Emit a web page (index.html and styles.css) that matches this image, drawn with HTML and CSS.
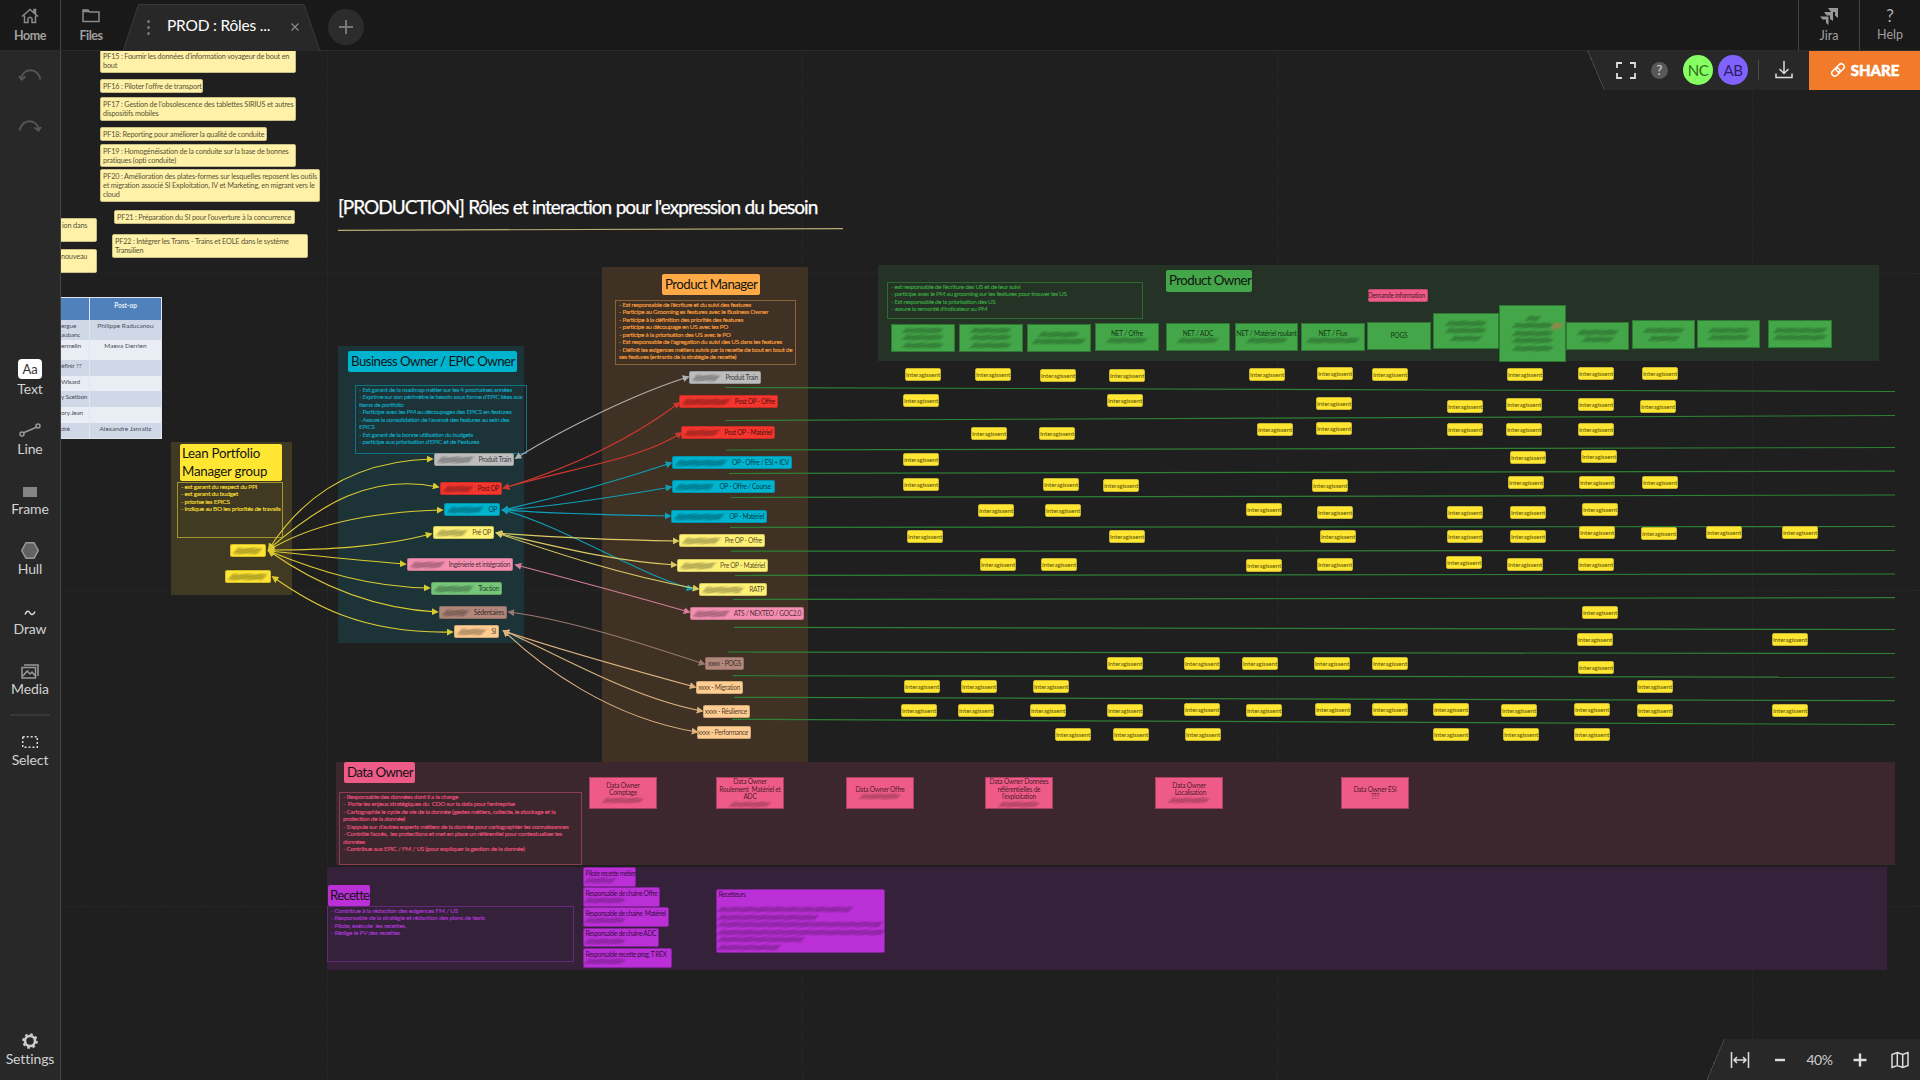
FILE: index.html
```html
<!DOCTYPE html>
<html lang="fr">
<head>
<meta charset="utf-8">
<title>PROD : Rôles et interaction</title>
<link rel="stylesheet" href="styles.css">
</head>
<body>
<header class="topbar">
  <a class="top-item top-home"><svg width="18" height="16" viewBox="0 0 18 16"><path d="M1 8.500 9 1.500l8 7M3.500 7.500V14.500H7V10.500q2-2.500 4 0V14.500h3.500V7.500M13 4.500V1.500h1.500V6"/></svg><span>Home</span></a>
  <a class="top-item top-files"><svg width="18" height="16" viewBox="0 0 18 16"><path d="M1 13.500V2h5l1.500 2H17v9.500zM1 3.500h6"/></svg><span>Files</span></a>
  <div class="tab">
    <svg class="tab-shape" width="198" height="47" viewBox="0 0 198 47"><path d="M0 47 15.500.5H181L197 47"/></svg>
    <span class="tab-dots"><i></i><i></i><i></i></span>
    <span class="tab-title">PROD : Rôles ...</span>
    <svg class="tab-close" width="8" height="8" viewBox="0 0 8 8"><path d="M.5.5l7 7M7.500.5l-7 7"/></svg>
  </div>
  <button class="tab-add"><svg width="16" height="16" viewBox="0 0 16 16"><path d="M8 1v14M1 8h14"/></svg></button>
  <div class="top-right">
    <a class="top-item"><svg class="solid" width="18" height="18" viewBox="0 0 18 18"><path d="M8 0h10v10l-3-2.500V4H11z"/><path d="M4 4h9v9l-3-2V7.500H6.500z"/><path d="M0 8.500h8.500V17L6 15v-3.500H2.500z"/></svg><span>Jira</span></a>
    <a class="top-item"><b class="qmark">?</b><span>Help</span></a>
  </div>
</header>

<div class="workspace">
  <nav class="sidebar">
    <svg class="undo" width="24" height="14" viewBox="0 0 24 14"><path d="M3 10C6 0 19-1 22.500 11.500M1 8l2.500 3.500L7.500 8.500"/></svg>
    <svg class="redo" width="24" height="14" viewBox="0 0 24 14"><path d="M21 10C18 0 5-1 1.500 11.500M23 8l-2.500 3.500L16.500 8.500"/></svg>
    <div class="tools">
      <a class="tool"><b class="aa">Aa</b><span>Text</span></a>
      <a class="tool"><svg width="22" height="14" viewBox="0 0 22 14"><path d="M4 10 18 4"/><circle cx="3" cy="11" r="2"/><circle cx="19" cy="3" r="2"/></svg><span class="gap2">Line</span></a>
      <a class="tool"><i class="frame-ico"></i><span class="gap2">Frame</span></a>
      <a class="tool"><svg class="hull" width="18" height="17" viewBox="0 0 18 17"><path d="M5 .7h8l4.300 7.800L13 16.300H5L.7 8.500z"/></svg><span>Hull</span></a>
      <a class="tool"><svg class="bright" width="12" height="6" viewBox="0 0 12 6"><path d="M1 4.500C3-.5 5 1 6 3s3.500 2.500 5-1.500"/></svg><span class="gap3">Draw</span></a>
      <a class="tool"><svg width="18" height="15" viewBox="0 0 18 15"><path d="M1 3.500h13.500V14H1zM3 1h14v11M2 12l4-5 3 3 2-2 3 3.500M7 6.500h.5"/></svg><span>Media</span></a>
      <hr>
      <a class="tool select"><svg class="bright" width="16" height="12" viewBox="0 0 16 12"><path stroke-dasharray="2 2" d="M.7.7h14.600v10.600H.7z"/></svg><span class="gap2">Select</span></a>
    </div>
    <a class="tool settings"><svg class="gear" width="16" height="16" viewBox="0 0 16 16"><circle cx="8" cy="8" r="5"/><circle class="teeth" cx="8" cy="8" r="6.800"/></svg><span>Settings</span></a>
  </nav>

  <main class="canvas">
  <div class="board">
    <i class="gv" style="left:327px"></i><i class="gv" style="left:802px"></i><i class="gv" style="left:1277px"></i><i class="gv" style="left:1752px"></i>
    <i class="gh" style="top:273px"></i><i class="gh" style="top:590px"></i><i class="gh" style="top:906px"></i>

    <div class="note" style="left:100px;top:49px;width:196px;height:24px">PF15 : Fournir les données d'information voyageur de bout en<br>bout</div>
    <div class="note" style="left:100px;top:79px;width:103px;height:14px">PF16 : Piloter l'offre de transport</div>
    <div class="note" style="left:100px;top:97px;width:196px;height:24px">PF17 : Gestion de l'obsolescence des tablettes SIRIUS et autres<br>dispositifs mobiles</div>
    <div class="note" style="left:100px;top:127px;width:167px;height:14px">PF18: Reporting pour améliorer la qualité de conduite</div>
    <div class="note" style="left:100px;top:144px;width:196px;height:23px">PF19 : Homogénéisation de la conduite sur la base de bonnes<br>pratiques (opti conduite)</div>
    <div class="note" style="left:100px;top:169px;width:220px;height:33px">PF20 : Amélioration des plates-formes sur lesquelles reposent les outils<br>et migration associé SI Exploitation, IV et Marketing, en migrant vers le<br>cloud</div>
    <div class="note" style="left:114px;top:210px;width:181px;height:14px">PF21 : Préparation du SI pour l'ouverture à la concurrence</div>
    <div class="note" style="left:112px;top:234px;width:196px;height:24px">PF22 : Intégrer les Trams - Trains et EOLE dans le système<br>Transilien</div>
    <div class="note" style="left:59px;top:218px;width:38px;height:24px">ion dans<br>&nbsp;</div>
    <div class="note" style="left:58px;top:249px;width:39px;height:24px">nouveau<br>&nbsp;</div>

    <table class="roster">
      <tr class="r22"><th></th><th>Post-op</th></tr>
      <tr class="r20"><td>ergue<br>aubanc</td><td>Philippe Raducanou</td></tr>
      <tr class="r20"><td>ermelin</td><td>Maeva Derrien</td></tr>
      <tr><td>éfinir ??</td><td></td></tr>
      <tr><td>Wisard</td><td></td></tr>
      <tr><td>y Scetbon</td><td></td></tr>
      <tr><td>ory Jean</td><td></td></tr>
      <tr><td>dré</td><td>Alexandre Janraitz</td></tr>
    </table>

    <h1 class="board-title">[PRODUCTION] Rôles et interaction pour l'expression du besoin</h1>

    <section class="zone z-lean" style="left:171px;top:442px;width:121px;height:153px"></section>
    <section class="zone z-bo" style="left:338px;top:346px;width:186px;height:297px"></section>
    <section class="zone z-pm" style="left:602px;top:267px;width:206px;height:496px"></section>
    <section class="zone z-po" style="left:878px;top:265px;width:1001px;height:96px"></section>
    <section class="zone z-do" style="left:336px;top:762px;width:1559px;height:103px"></section>
    <section class="zone z-re" style="left:327px;top:867px;width:1560px;height:103px"></section>

    <h2 class="head yellow two" style="left:180px;top:444px;width:102px;height:37px">Lean Portfolio<br>Manager group</h2>
    <h2 class="head cyan" style="left:348px;top:351px;width:169px;height:21px">Business Owner / EPIC Owner</h2>
    <h2 class="head orange" style="left:662px;top:274px;width:98px;height:21px">Product Manager</h2>
    <h2 class="head green" style="left:1166px;top:270px;width:86px;height:22px">Product Owner</h2>
    <h2 class="head rose" style="left:344px;top:762px;width:71px;height:21px">Data Owner</h2>
    <h2 class="head violet" style="left:328px;top:885px;width:42px;height:21px">Recette</h2>

    <div class="desc d-lean" style="left:177px;top:482px;width:106px;height:56px">- est garant du respect du PPI<br>- est garant du budget<br>- priorise les EPICS<br>- Indique au BO les priorités de travails</div>
    <div class="desc d-bo" style="left:355px;top:385px;width:172px;height:69px">- Est garant de la roadmap métier sur les 4 prochaines années<br>- Exprime sur son périmètre le besoin sous forme d'EPIC liées aux<br>items de portfolio<br>- Participe avec les PM au découpages des EPICS en features<br>- Assure la consolidation de l'avancé des features au sein des<br>EPICS<br>- Est garant de la bonne utilisation du budgets<br>- participe aux priorisation d'EPIC et de Features</div>
    <div class="desc d-pm" style="left:615px;top:300px;width:181px;height:65px">- Est responsable de l'écriture et du suivi des features<br>- Participe au Grooming es features avec le Business Owner<br>- Participe à la définition des priorités des features<br>- participe au découpage en US avec les PO<br>- participe à la priorisation des US avec le PO<br>- Est responsable de l'agregation du suivi des US dans les features<br>- Définit les exigences métiers suivis par la recette de bout en bout de<br>ses features (entrants de la stratégie de recette)</div>
    <div class="desc d-po" style="left:887px;top:282px;width:256px;height:37px">- est responsable de l'écriture des US et de leur suivi<br>- participe avec le PM au grooming sur les features pour trouver les US<br>- Est responsable de la priorisation des US<br>- assure la remonté d'indicateur au PM</div>
    <div class="desc d-do" style="left:339px;top:792px;width:243px;height:73px">- Responsable des données dont il a la charge<br>-&nbsp; Porte les enjeux stratégiques du&nbsp; CDO sur la data pour l'entreprise<br>- Cartographie le cycle de vie de la donnée (gestes métiers, collecte, le stockage et la<br>protection de la donnée)<br>- S'appuie sur d'autres experts métiers de la donnée pour cartographier les connaissances<br>- Contrôle l'accès,&nbsp; les protections et met en place un référentiel pour contextualiser les<br>données<br>- Contribue aux EPIC / FM / US (pour expliquer la gestion de la donnée)</div>
    <div class="desc d-re" style="left:327px;top:906px;width:247px;height:56px">- Contribue à la rédaction des exigences FM / US<br>- Responsable de la stratégie et rédaction des plans de tests<br>- Pilote, exécute&nbsp; les recettes,<br>- Rédige le PV des recettes</div>

    <div class="node yellow" style="left:230px;top:544px;width:36px"><i></i></div>
    <div class="node yellow" style="left:225px;top:570px;width:46px"><i></i></div>

    <div class="node grey" style="left:434px;top:453px;width:80px"><i></i>Produit Train</div>
    <div class="node red" style="left:440px;top:482px;width:62px"><i></i>Post OP</div>
    <div class="node cyan" style="left:444px;top:503px;width:56px"><i></i>OP</div>
    <div class="node lemon" style="left:433px;top:526px;width:61px"><i></i>Pré OP</div>
    <div class="node pink" style="left:407px;top:558px;width:106px"><i></i>Ingénierie et intégration</div>
    <div class="node mint" style="left:431px;top:582px;width:71px"><i></i>Traction</div>
    <div class="node brown" style="left:439px;top:606px;width:68px"><i></i>Sédentaires</div>
    <div class="node peach" style="left:454px;top:625px;width:45px"><i></i>SI</div>

    <div class="node grey" style="left:689px;top:371px;width:72px"><i></i>Produit Train</div>
    <div class="node red" style="left:679px;top:395px;width:99px"><i></i>Post OP - Offre</div>
    <div class="node red" style="left:681px;top:426px;width:94px"><i></i>Post OP - Matériel</div>
    <div class="node cyan" style="left:672px;top:456px;width:120px"><i></i>OP - Offre / ESI + ICV</div>
    <div class="node cyan" style="left:672px;top:480px;width:103px"><i></i>OP - Offre / Course&nbsp;</div>
    <div class="node cyan" style="left:671px;top:510px;width:96px"><i></i>OP - Matériel</div>
    <div class="node lemon" style="left:679px;top:534px;width:86px"><i></i>Pre OP - Offre</div>
    <div class="node lemon" style="left:677px;top:559px;width:91px"><i></i>Pre OP - Matériel</div>
    <div class="node lemon" style="left:699px;top:583px;width:68px"><i></i>RATP</div>
    <div class="node pink" style="left:690px;top:607px;width:114px"><i></i>ATS / NEXTEO / GOC2.0</div>
    <div class="node brown" style="left:705px;top:657px;width:39px">xxxx - POGS</div>
    <div class="node peach" style="left:696px;top:681px;width:47px">xxxx - Migration</div>
    <div class="node peach" style="left:703px;top:705px;width:47px">xxxx - Résilience</div>
    <div class="node peach" style="left:697px;top:726px;width:54px">xxxx - Performance</div>
    <div class="node rose" style="left:1368px;top:289px;width:60px">Demande information</div>

    <div class="card green" style="left:891px;top:324px;width:64px;height:28px"><i></i><i></i><i></i></div>
    <div class="card green" style="left:959px;top:324px;width:64px;height:28px"><i></i><i></i><i></i></div>
    <div class="card green" style="left:1027px;top:324px;width:64px;height:28px"><i></i><i class="wide"></i></div>
    <div class="card green" style="left:1095px;top:323px;width:64px;height:28px">NET / Offre<i></i></div>
    <div class="card green" style="left:1166px;top:323px;width:64px;height:28px">NET / ADC<i></i></div>
    <div class="card green" style="left:1235px;top:323px;width:63px;height:28px">NET / Matériel roulant<i></i></div>
    <div class="card green" style="left:1301px;top:323px;width:64px;height:28px">NET / Flux<i class="wide"></i></div>
    <div class="card green" style="left:1367px;top:322px;width:64px;height:28px">POGS</div>
    <div class="card green" style="left:1433px;top:313px;width:66px;height:36px"><i></i><i></i><i class="short"></i></div>
    <div class="card green" style="left:1566px;top:322px;width:63px;height:28px"><i></i><i class="short"></i></div>
    <div class="card green" style="left:1499px;top:305px;width:67px;height:57px"><i class="tiny"></i><i></i><i></i><i></i><i></i></div>
    <div class="card green" style="left:1632px;top:320px;width:63px;height:29px"><i></i><i class="short"></i></div>
    <div class="card green" style="left:1697px;top:320px;width:63px;height:28px"><i></i><i></i></div>
    <div class="card green" style="left:1768px;top:320px;width:64px;height:28px"><i class="wide"></i><i class="wide"></i></div>
    <i class="spot"></i>

    <div class="card rose" style="left:589px;top:777px;width:68px;height:32px">Data Owner<br>Comptage<i></i></div>
    <div class="card rose" style="left:716px;top:777px;width:68px;height:32px">Data Owner<br>Roulement&nbsp; Matériel et<br>ADC<i></i></div>
    <div class="card rose" style="left:846px;top:777px;width:68px;height:32px">Data Owner Offre<i></i></div>
    <div class="card rose" style="left:985px;top:777px;width:68px;height:32px">Data Owner Données<br>référentielles de<br>l'exploitation<i></i></div>
    <div class="card rose" style="left:1155px;top:777px;width:68px;height:32px">Data Owner<br>&nbsp; Localisation<i></i></div>
    <div class="card rose" style="left:1341px;top:777px;width:68px;height:32px">Data Owner ESI<br>???</div>

    <div class="card violet left" style="left:583px;top:867px;width:53px;height:20px">Pilote recette métier<i class="short"></i></div>
    <div class="card violet left" style="left:583px;top:887px;width:77px;height:20px">Responsable de chaine Offre<i></i></div>
    <div class="card violet left" style="left:583px;top:907px;width:86px;height:20px">Responsable de chaine&nbsp; Matériel<i></i></div>
    <div class="card violet left" style="left:583px;top:928px;width:76px;height:19px">Responsable de chaine ADC<i></i></div>
    <div class="card violet left" style="left:583px;top:948px;width:89px;height:20px">Responsable recette prog. T REX<i></i></div>
    <div class="card violet left" style="left:716px;top:889px;width:169px;height:64px">Recetteurs<em></em><i style="width:132px"></i><i style="width:98px"></i><i style="width:162px"></i><i style="width:164px"></i><i style="width:84px"></i><i style="width:60px"></i></div>

    <svg class="links" width="1920" height="1080" viewBox="0 0 1920 1080">
      <defs>
        <marker id="arrow" viewBox="0 0 6 6" refX="4.500" refY="3" markerWidth="7" markerHeight="7" markerUnits="userSpaceOnUse" orient="auto-start-reverse"><path stroke="none" d="M0 0 6 3 0 6z" fill="context-stroke"/></marker>
      </defs>
      <path class="rule" d="M338 230.300 843 228.600"/>
      <g class="lanes">
        <path d="M725 387.500 1895 391.500"/><path d="M725 420.500 1895 415.500"/><path d="M726 450 1895 447.500"/><path d="M729 473.500 1895 471.200"/><path d="M731 497.500 1895 495"/><path d="M730 527.300 1895 526.500"/><path d="M731 551.200 1895 550.500"/><path d="M735 575.500 1895 574"/><path d="M733 599.500 1895 597.700"/><path d="M734 627.300 1895 629.500"/><path d="M728 652 1895 653.500"/><path d="M733 675.700 1895 677.200"/><path d="M734 697.300 1895 700.700"/><path d="M732 719.300 1895 724.500"/>
      </g>
      <g class="arrows">
        <g stroke="#ddcb33"><path d="M269 549C300 500 350 461 432 459"/><path d="M269 549C320 505 370 473 438 487"/><path d="M269 550C310 525 370 512 442 510"/><path d="M269 550C330 550 380 547 431 534"/><path d="M269 551C310 555 350 560 405 564"/><path d="M269 551C320 572 370 587 429 588"/><path d="M269 551C310 580 365 608 437 612"/><path d="M273 577C310 603 360 634 452 632"/></g>
        <g stroke="#b0b0b0"><path d="M516 458C570 425 640 392 688 377"/></g>
        <g stroke="#cf382f"><path d="M504 488C570 468 630 440 679 403"/><path d="M504 488C570 468 640 460 681 433"/></g>
        <g stroke="#109fb8"><path d="M503 510C560 497 620 480 671 463"/><path d="M503 510C560 506 620 496 671 487"/><path d="M503 510C560 514 620 515 670 516"/><path d="M503 510C560 525 640 575 692 589"/></g>
        <g stroke="#dccb62"><path d="M497 533C560 538 620 540 678 541"/><path d="M497 533C550 545 610 561 676 565"/><path d="M497 533C550 551 620 575 698 589"/></g>
        <g stroke="#d47e9b"><path d="M516 565C570 579 640 598 689 612"/></g>
        <g stroke="#9a786c"><path d="M509 612C570 620 640 643 704 664"/></g>
        <g stroke="#ddb27f"><path d="M504 631C560 650 640 672 695 687"/><path d="M504 631C550 650 630 698 702 711"/><path d="M504 631C540 666 610 718 697 732"/></g>
      </g>
    </svg>

    <b class="tag" style="left:905px;top:368px">Interagissent</b><b class="tag" style="left:975px;top:368px">Interagissent</b><b class="tag" style="left:1040px;top:369px">Interagissent</b><b class="tag" style="left:1109px;top:369px">Interagissent</b><b class="tag" style="left:1249px;top:368px">Interagissent</b><b class="tag" style="left:1317px;top:367px">Interagissent</b><b class="tag" style="left:1372px;top:368px">Interagissent</b><b class="tag" style="left:1507px;top:368px">Interagissent</b><b class="tag" style="left:1578px;top:367px">Interagissent</b><b class="tag" style="left:1642px;top:367px">Interagissent</b>
    <b class="tag" style="left:903px;top:394px">Interagissent</b><b class="tag" style="left:1107px;top:394px">Interagissent</b><b class="tag" style="left:1316px;top:397px">Interagissent</b><b class="tag" style="left:1447px;top:400px">Interagissent</b><b class="tag" style="left:1506px;top:398px">Interagissent</b><b class="tag" style="left:1578px;top:398px">Interagissent</b><b class="tag" style="left:1640px;top:400px">Interagissent</b>
    <b class="tag" style="left:971px;top:427px">Interagissent</b><b class="tag" style="left:1039px;top:427px">Interagissent</b><b class="tag" style="left:1257px;top:423px">Interagissent</b><b class="tag" style="left:1316px;top:422px">Interagissent</b><b class="tag" style="left:1447px;top:423px">Interagissent</b><b class="tag" style="left:1506px;top:423px">Interagissent</b><b class="tag" style="left:1578px;top:423px">Interagissent</b>
    <b class="tag" style="left:903px;top:453px">Interagissent</b><b class="tag" style="left:1510px;top:451px">Interagissent</b><b class="tag" style="left:1581px;top:450px">Interagissent</b>
    <b class="tag" style="left:903px;top:478px">Interagissent</b><b class="tag" style="left:1043px;top:478px">Interagissent</b><b class="tag" style="left:1103px;top:479px">Interagissent</b><b class="tag" style="left:1312px;top:479px">Interagissent</b><b class="tag" style="left:1508px;top:476px">Interagissent</b><b class="tag" style="left:1579px;top:476px">Interagissent</b><b class="tag" style="left:1642px;top:476px">Interagissent</b>
    <b class="tag" style="left:978px;top:504px">Interagissent</b><b class="tag" style="left:1045px;top:504px">Interagissent</b><b class="tag" style="left:1246px;top:503px">Interagissent</b><b class="tag" style="left:1317px;top:506px">Interagissent</b><b class="tag" style="left:1447px;top:506px">Interagissent</b><b class="tag" style="left:1510px;top:506px">Interagissent</b><b class="tag" style="left:1582px;top:503px">Interagissent</b>
    <b class="tag" style="left:907px;top:530px">Interagissent</b><b class="tag" style="left:1109px;top:530px">Interagissent</b><b class="tag" style="left:1320px;top:530px">Interagissent</b><b class="tag" style="left:1447px;top:530px">Interagissent</b><b class="tag" style="left:1510px;top:530px">Interagissent</b><b class="tag" style="left:1579px;top:526px">Interagissent</b><b class="tag" style="left:1641px;top:527px">Interagissent</b><b class="tag" style="left:1706px;top:526px">Interagissent</b><b class="tag" style="left:1782px;top:526px">Interagissent</b>
    <b class="tag" style="left:980px;top:558px">Interagissent</b><b class="tag" style="left:1041px;top:558px">Interagissent</b><b class="tag" style="left:1246px;top:559px">Interagissent</b><b class="tag" style="left:1317px;top:558px">Interagissent</b><b class="tag" style="left:1446px;top:556px">Interagissent</b><b class="tag" style="left:1507px;top:558px">Interagissent</b><b class="tag" style="left:1578px;top:558px">Interagissent</b>
    <b class="tag" style="left:1582px;top:606px">Interagissent</b>
    <b class="tag" style="left:1577px;top:633px">Interagissent</b><b class="tag" style="left:1772px;top:633px">Interagissent</b>
    <b class="tag" style="left:1107px;top:657px">Interagissent</b><b class="tag" style="left:1184px;top:657px">Interagissent</b><b class="tag" style="left:1242px;top:657px">Interagissent</b><b class="tag" style="left:1314px;top:657px">Interagissent</b><b class="tag" style="left:1372px;top:657px">Interagissent</b><b class="tag" style="left:1578px;top:661px">Interagissent</b>
    <b class="tag" style="left:904px;top:680px">Interagissent</b><b class="tag" style="left:961px;top:680px">Interagissent</b><b class="tag" style="left:1033px;top:680px">Interagissent</b><b class="tag" style="left:1637px;top:680px">Interagissent</b>
    <b class="tag" style="left:901px;top:704px">Interagissent</b><b class="tag" style="left:958px;top:704px">Interagissent</b><b class="tag" style="left:1030px;top:704px">Interagissent</b><b class="tag" style="left:1107px;top:704px">Interagissent</b><b class="tag" style="left:1184px;top:703px">Interagissent</b><b class="tag" style="left:1246px;top:704px">Interagissent</b><b class="tag" style="left:1315px;top:703px">Interagissent</b><b class="tag" style="left:1372px;top:703px">Interagissent</b><b class="tag" style="left:1433px;top:703px">Interagissent</b><b class="tag" style="left:1501px;top:704px">Interagissent</b><b class="tag" style="left:1574px;top:703px">Interagissent</b><b class="tag" style="left:1637px;top:704px">Interagissent</b><b class="tag" style="left:1772px;top:704px">Interagissent</b>
    <b class="tag" style="left:1055px;top:728px">Interagissent</b><b class="tag" style="left:1113px;top:728px">Interagissent</b><b class="tag" style="left:1185px;top:728px">Interagissent</b><b class="tag" style="left:1433px;top:728px">Interagissent</b><b class="tag" style="left:1503px;top:728px">Interagissent</b><b class="tag" style="left:1574px;top:728px">Interagissent</b>
  </div>

  <div class="actions">
    <svg width="20" height="17" viewBox="0 0 20 17"><path stroke-width="1.800" d="M1 6V1h5M14 1h5v5M19 11v5h-5M6 16H1v-5"/></svg>
    <b class="help-dot">?</b>
    <span class="avatar nc">NC</span>
    <span class="avatar ab">AB</span>
    <i class="divider"></i>
    <svg class="download" width="18" height="18" viewBox="0 0 18 18"><path d="M9 0v12M4.500 8 9 12.500 13.500 8M1 12.500V16.500h16v-4"/></svg>
    <button class="share"><svg width="16" height="16" viewBox="0 0 16 16"><g transform="rotate(-45 8 8)"><rect x=".5" y="5" width="9" height="6" rx="3"/><rect x="6.500" y="5" width="9" height="6" rx="3"/></g></svg>SHARE</button>
  </div>

  <div class="zoombar">
    <svg width="20" height="16" viewBox="0 0 20 16"><path d="M1.500 0v16M18.500 0v16M4 8h12M7 5 4 8l3 3M13 5l3 3-3 3"/></svg>
    <svg class="minus" width="12" height="12" viewBox="0 0 12 12"><path stroke-width="2.400" d="M1 6h10"/></svg>
    <span>40%</span>
    <svg class="plus" width="14" height="14" viewBox="0 0 14 14"><path stroke-width="2.400" d="M7 .5v13M.5 7h13"/></svg>
    <svg width="18" height="18" viewBox="0 0 18 18"><path d="M1 3.500 6.300 1.500 11.700 3.500 17 1.500V14.500L11.700 16.500 6.300 14.500 1 16.500zM6.300 1.500v13M11.700 3.500v13"/></svg>
  </div>
  </main>
</div>
</body>
</html>
```
FILE: styles.css
```css
* { box-sizing: border-box; }
body {
  margin: 0; width: 1920px; height: 1080px; overflow: hidden;
  display: flex; flex-direction: column;
  background: #1f1f1f; color: #ccc;
  font-family: Lato, "Open Sans", sans-serif;
}
svg { fill: none; stroke: #999; stroke-width: 1.5; display: block; }
button { border: 0; padding: 0; font: inherit; color: inherit; }
.solid { fill: #999; stroke: none; }
.bright { stroke: #ddd; }

/* top bar */
.topbar { position: relative; z-index: 3; height: 51px; flex: none; display: flex; background: #191919; border-bottom: 1px solid #2c2c2c; }
.top-item { width: 61px; display: flex; flex-direction: column; align-items: center; padding-top: 8px; color: #a0a0a0; font-size: 12.500px; line-height: 14px; gap: 5px; }
.top-item svg:not(.solid) { stroke: #8a8a8a; }
.top-home { border-right: 1px solid #454545; }
.top-files { padding-right: 1px; }
.top-home, .top-files { font-weight: 700; letter-spacing: -.5px; }
.tab { position: relative; margin: 4px 0 0 1px; width: 198px; height: 46px; display: flex; align-items: center; }
.tab-shape { position: absolute; inset: 0; fill: #282828; stroke: #3a3a3a; stroke-width: 1; }
.tab-dots { position: relative; margin-left: 24px; display: flex; flex-direction: column; gap: 3px; }
.tab-dots i { width: 3px; height: 3px; border-radius: 50%; background: #777; }
.tab-title { position: relative; margin: -4px 0 0 17px; width: 103px; white-space: nowrap; color: #fff; font-size: 15.500px; letter-spacing: -.2px; }
.tab-close { position: relative; margin-left: 21px; stroke: #888; stroke-width: 1.200; }
.tab-add { margin: 9px 0 0 7px; width: 36px; height: 36px; border-radius: 50%; background: #2c2c2c; display: grid; place-items: center; }
.tab-add svg { stroke: #777; stroke-width: 2; }
.top-right { margin-left: auto; display: flex; }
.top-right .top-item { border-left: 1px solid #454545; gap: 3px; }
.qmark { font-size: 17px; line-height: 16px; font-weight: 400; color: #b0b0b0; }
.qmark + span { padding-top: 1px; }

/* left tools */
.workspace { flex: 1; display: flex; min-height: 0; }
.sidebar { position: relative; z-index: 2; width: 61px; flex: none; background: #282828; border-right: 1px solid #454545; display: flex; flex-direction: column; align-items: center; }
.undo, .redo { stroke: #555; stroke-width: 2; margin-top: 17px; }
.redo { margin-top: 37px; }
.tools { margin-top: 206px; width: 60px; display: flex; flex-direction: column; align-items: center; }
.tool { height: 60px; display: flex; flex-direction: column; align-items: center; justify-content: flex-end; font-size: 14px; line-height: 20px; color: #d2d2d2; letter-spacing: -.1px; }
.tool .gap3 { padding-top: 3px; }
.tool .gap2 { padding-top: 2px; }
.aa { width: 24px; height: 20px; border-radius: 4px; background: #fff; color: #333; font-size: 13px; font-weight: 400; text-align: center; }
.frame-ico { width: 14px; height: 10px; background: #858585; }
.hull { fill: #626262; stroke: #999; }
.tools hr { width: 40px; height: 2px; margin: 15px 0 0; border: 0; background: #383838; }
.tool.select { height: 54px; }
.tool.settings { margin-top: auto; margin-bottom: 11px; height: 36px; }
.gear { stroke: #ccc; stroke-width: 2.600; flex: none; }
.gear .teeth { stroke-width: 2; stroke-dasharray: 2.700 2.640; }

/* canvas */
.canvas { position: relative; flex: 1; overflow: hidden; background: #1f1f1f; }
.board { position: absolute; left: -61px; top: -51px; width: 1920px; height: 1080px; }
.board > * { position: absolute; margin: 0; white-space: nowrap; }
.gv { top: 0; height: 1080px; border-left: 1px dashed #282828; }
.gh { left: 0; width: 1920px; border-top: 1px dashed #282828; }
.note { padding: 1.500px 0 0 2px; border-radius: 2px; background: #fff2a8; border: 1px solid #c9bf85; color: #5a5338; font-size: 7.300px; line-height: 9.200px; letter-spacing: -.18px; }
.board-title { left: 338px; top: 193px; font-size: 19px; line-height: 28px; font-weight: 400; color: #fff; letter-spacing: -.96px; word-spacing: .5px; -webkit-text-stroke: .25px #fff; }

.roster { left: 58px; top: 297px; width: 104px; table-layout: fixed; border-collapse: collapse; font: 6.500px/9px Lato, sans-serif; color: #4a505c; border: 1px solid #dfe3ea; }
.roster tr { height: 15.700px; background: #d0d8e8; }
.roster tr:nth-child(odd) { background: #e9edf4; }
.roster tr.r20 { height: 20px; }
.roster tr.r22 { height: 22.500px; background: #4f81bd; color: #e6edf6; }
.roster td, .roster th { padding: 1px 2px; vertical-align: top; text-align: center; border-right: 1px solid #dfe6f0; }
.roster th { padding-top: 3px; }
.roster td:first-child, .roster th:first-child { width: 31px; text-align: left; overflow: visible; letter-spacing: -.2px; }

.z-lean { background: #403a22; }
.z-bo { background: #1c3338; }
.z-pm { background: #3f3225; }
.z-po { background: #253326; }
.z-do { background: #3d272e; }
.z-re { background: #35213a; }

.head { padding-left: 3px; border-radius: 2px; color: #141414; font-size: 13.300px; line-height: 21px; font-weight: 400; letter-spacing: -.57px; }
.head.two { line-height: 17.500px; padding: 1px 0 0 2px; letter-spacing: -.25px; }
.head.violet { padding-left: 2px; letter-spacing: -.75px; }
.yellow { background: #ffe633; }
.cyan { background: #00b4d0; }
.orange { background: #ffaa46; }
.green { background: #43a648; }
.rose { background: #ee5b88; }
.violet { background: #ba30d6; }
.grey { background: #bdbdbd; }
.red { background: #f4362e; }
.lemon { background: #fff176; }
.pink { background: #f48fb1; }
.mint { background: #76c77a; }
.brown { background: #b0877a; }
.peach { background: #ffcc91; }

.desc { padding: 0 0 0 3px; border: 1px solid; font-size: 6.400px; line-height: 7.450px; letter-spacing: -.3px; -webkit-text-stroke: .15px currentColor; }
.d-lean { border-color: #a3942f; color: #f2da35; letter-spacing: -.22px; }
.d-bo { border-color: #107384; color: #10a5be; }
.d-pm { border-color: #8d6334; color: #f59c3d; }
.d-po { border-color: #2c6b30; color: #3aa340; }
.d-do { border-color: #8e3d55; color: #e5507c; letter-spacing: -.26px; }
.d-re { border-color: #64297a; color: #a638cb; letter-spacing: -.21px; }

.node { height: 13px; padding: 0 2px 0 1px; display: flex; align-items: center; justify-content: flex-end; gap: 4px; border-radius: 2px; border: 1px solid rgba(0, 0, 0, .18); color: rgba(0, 0, 0, .72); font-size: 6.600px; line-height: 11px; letter-spacing: -.32px; }
.node i, .card i {
  height: 6px; flex: 1; transform: skewX(-40deg); filter: blur(.9px);
  background: repeating-linear-gradient(168deg, rgba(0, 0, 0, .42) 0 1.500px, rgba(0, 0, 0, .12) 1.500px 3px);
}
.node i { margin: 0 3px; }
.card { display: flex; flex-direction: column; align-items: center; justify-content: center; text-align: center; border: 1px solid rgba(0, 0, 0, .28); color: rgba(0, 0, 0, .72); font-size: 6.600px; line-height: 7.500px; letter-spacing: -.22px; }
.card i { flex: none; width: 38px; height: 5px; margin: 1px 0 1.500px; opacity: .8; }
.card i.wide { width: 50px; }
.card i.short { width: 28px; }
.card i.tiny { width: 12px; }
.card.left { align-items: flex-start; padding-left: 1.500px; border-radius: 2px; letter-spacing: -.42px; }
.card em { height: 8px; }
.spot { left: 1552px; top: 323px; width: 10px; height: 6px; background: #8c8a4c; transform: skewX(-30deg); filter: blur(1px); }

.tag { width: 36px; height: 13px; border-radius: 2px; background: #ffe633; border: 1px solid #c9b62f; color: #5c5208; font-size: 6.300px; line-height: 11px; font-weight: 400; text-align: center; letter-spacing: -.1px; }
.links { left: 0; top: 0; }
.rule { stroke: #b5ac72; stroke-width: 1.200; }
.lanes { stroke: #2d8034; stroke-width: 1.200; }
.arrows { stroke-width: 1.100; }
.arrows path { marker-start: url(#arrow); marker-end: url(#arrow); }

/* upper right actions */
.actions { position: absolute; top: -1px; right: 0; height: 40px; width: 333px; padding-left: 29px; display: flex; align-items: center; background: linear-gradient(67deg, transparent 15.500px, #454545 15.500px 16.500px, #282828 16.500px); }
.actions svg { stroke: #ddd; }
.help-dot { margin-left: 15px; width: 17px; height: 17px; border-radius: 50%; background: #585858; color: #ddd; font-size: 13px; line-height: 17px; text-align: center; font-weight: 400; }
.avatar { margin-left: 15px; width: 30px; height: 30px; border-radius: 50%; font-size: 15px; line-height: 30px; text-align: center; letter-spacing: -.5px; }
.nc { background: #86ff62; color: #2f6b20; }
.ab { margin-left: 5px; background: #8063ff; color: #2b1d66; }
.divider { margin-left: 10px; width: 1px; height: 20px; background: #4a4a4a; }
.download { margin-left: 16px; }
.share { margin-left: auto; width: 111px; height: 40px; background: #f27b2b; color: #fff; display: flex; align-items: center; justify-content: center; gap: 5px; font-size: 15px; font-weight: 900; -webkit-text-stroke: .5px #fff; }
.actions .share svg { stroke: #fff; }

/* lower right zoom controls */
.zoombar { position: absolute; right: 0; bottom: 0; width: 213px; height: 41px; padding: 0 11px 0 23px; display: flex; align-items: center; justify-content: space-between; background: linear-gradient(113deg, transparent 15.500px, #454545 15.500px 16.500px, #282828 16.500px); }
.zoombar svg { stroke: #ddd; }
.zoombar .minus { margin-left: 3px; }
.zoombar .plus { margin-right: 3px; }
.zoombar span { font-size: 14px; letter-spacing: -.5px; }
```
